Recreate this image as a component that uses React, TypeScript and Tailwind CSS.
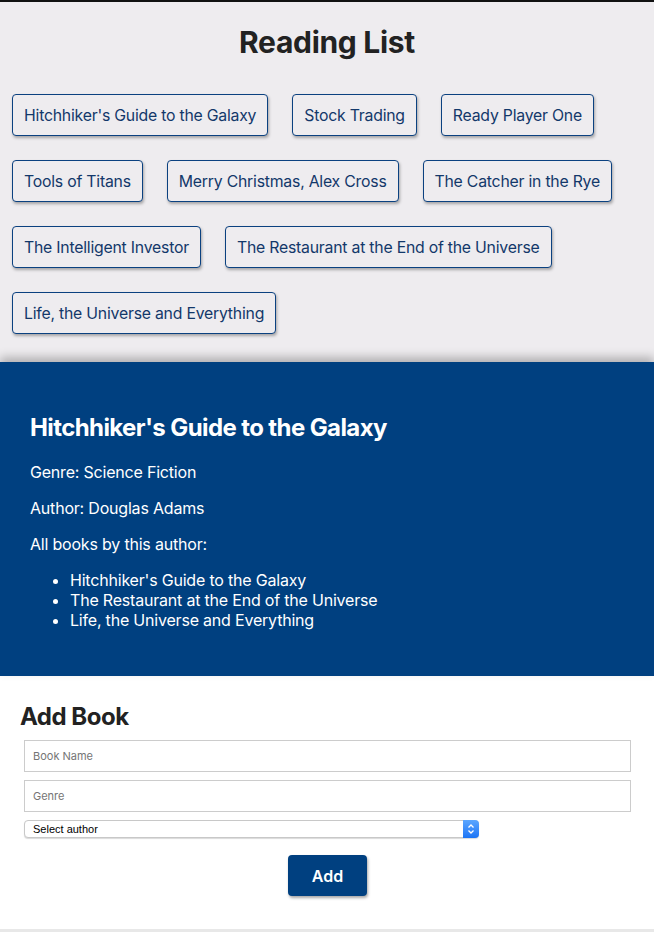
import React from "react";

const books = [
  "Hitchhiker's Guide to the Galaxy",
  "Stock Trading",
  "Ready Player One",
  "Tools of Titans",
  "Merry Christmas, Alex Cross",
  "The Catcher in the Rye",
  "The Intelligent Investor",
  "The Restaurant at the End of the Universe",
  "Life, the Universe and Everything",
];

export default function App() {
  return (
    <div className="w-[654px] min-h-[932px] bg-[#e8e8e8] font-['Inter',sans-serif]">
      <div className="border-t-[2px] border-[#111] bg-[#eeecef] pb-[16px]">
        <h1 className="text-center text-[30px] leading-[36px] font-bold text-[#222] pt-[22px] pb-[22px] tracking-[-0.3px]">
          Reading List
        </h1>
        <ul className="flex flex-wrap">
          {books.map((b) => (
            <li key={b} className="m-[12px]">
              <button className="h-[42px] px-[11px] pt-[2px] rounded-[4px] border border-[#0b4180] bg-[#eeecef] text-[#13386a] text-[15.8px] leading-[20px] shadow-[1px_2px_3px_rgba(0,0,0,0.3)] tracking-[-0.22px]">
                {b}
              </button>
            </li>
          ))}
        </ul>
      </div>
      <div className="relative bg-[#004080] text-white px-[30px] pt-[52px] pb-[46px] shadow-[0_-5px_9px_rgba(0,0,0,0.25)]">
        <h2 className="text-[24px] leading-[28px] font-bold tracking-[-0.6px]">
          Hitchhiker's Guide to the Galaxy
        </h2>
        <p className="mt-[20px] text-[16px] leading-[20px] tracking-[-0.2px]">Genre: Science Fiction</p>
        <p className="mt-[16px] text-[16px] leading-[20px] tracking-[-0.2px]">Author: Douglas Adams</p>
        <p className="mt-[16px] text-[16px] leading-[20px] tracking-[-0.2px]">All books by this author:</p>
        <ul className="mt-[16px] pl-[40px] list-disc text-[16px] leading-[20px] tracking-[-0.2px]">
          <li>Hitchhiker's Guide to the Galaxy</li>
          <li>The Restaurant at the End of the Universe</li>
          <li>Life, the Universe and Everything</li>
        </ul>
      </div>
      <div className="bg-white pt-[27px] h-[253px]">
        <h2 className="px-[20px] text-[24px] leading-[28px] font-bold text-[#222] tracking-[-0.5px]">
          Add Book
        </h2>
        <div className="px-[24px] pr-[23px] mt-[9px] flex flex-col">
          <input
            placeholder="Book Name"
            className="block h-[32px] w-full border border-[#cccccc] px-[8px] text-[11px] placeholder:text-[#757575] outline-none"
          />
          <input
            placeholder="Genre"
            className="block mt-[8px] h-[32px] w-full border border-[#cccccc] px-[8px] text-[11px] placeholder:text-[#757575] outline-none"
          />
          <div className="mt-[8px] relative w-[455px] h-[18px]">
            <select className="block appearance-none w-full h-[18px] rounded-[4px] border border-[#c8c8c8] bg-white pl-[8px] text-[11px] leading-[16px] text-black font-['Liberation_Sans',sans-serif] shadow-[0_1px_1px_rgba(0,0,0,0.15)] outline-none">
              <option>Select author</option>
            </select>
            <div className="absolute right-0 top-0 w-[16px] h-[18px] rounded-r-[4px] bg-gradient-to-b from-[#5ba6ff] to-[#1a74f5] flex items-center justify-center pointer-events-none">
              <svg width="8" height="12" viewBox="0 0 8 12" fill="none">
                <path d="M1.5 4.5 L4 2 L6.5 4.5" stroke="white" strokeWidth="1.3" />
                <path d="M1.5 7.5 L4 10 L6.5 7.5" stroke="white" strokeWidth="1.3" />
              </svg>
            </div>
          </div>
          <div className="flex justify-center mt-[17px]">
            <button className="w-[79px] h-[41px] rounded-[4px] bg-[#004080] text-white text-[16px] font-semibold shadow-[1px_2px_3px_rgba(0,0,0,0.35)]">
              Add
            </button>
          </div>
        </div>
      </div>
    </div>
  );
}
